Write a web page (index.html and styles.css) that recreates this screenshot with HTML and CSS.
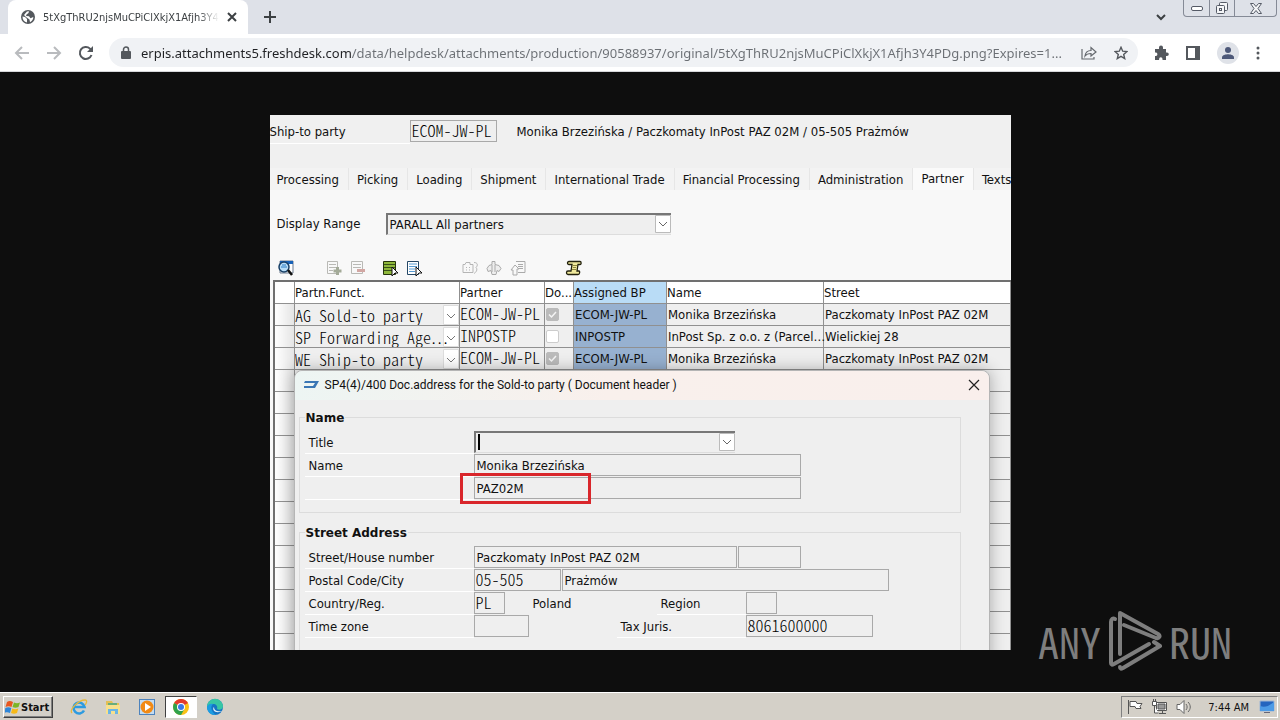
FILE: index.html
```html
<!DOCTYPE html>
<html lang="en">
<head>
    <meta charset="UTF-8">
    <meta name="viewport" content="width=device-width, initial-scale=1.0">
    <title>5tXgThRU2njsMuCPiClXkjX1Afjh3Y4PDg.png</title>
    <link rel="stylesheet" href="styles.css">
</head>
<body>
    <!-- browser tabs -->
    <header class="tab-strip">
        <div class="browser-tab">
            <svg class="globe" width="14" height="14" viewBox="0 0 14 14"><circle cx="7" cy="7" r="7" fill="#54585d"/><path d="M1.5 6.5 4 7l2 2v3.5C3 12 1.500 9.500 1.500 6.500zM6 1.500 8 1.300 7.500 3 5.500 4.500 5 6 8 6.200l1.500 2L12.300 7C12.500 9 11 11.500 9 12.200L8.500 9.500 5 7 3 5z" fill="#fff"/></svg>
            <span class="tab-title">5tXgThRU2njsMuCPiClXkjX1Afjh3Y4P</span>
            <button class="icon-btn" aria-label="Close tab"><svg width="10" height="10" viewBox="0 0 10 10"><path d="M1 1l8 8M9 1L1 9" stroke="#3c4043" stroke-width="2"/></svg></button>
        </div>
        <button class="icon-btn new-tab" aria-label="New tab"><svg width="12" height="12" viewBox="0 0 12 12"><path d="M6 0v12M0 6h12" stroke="#3c4043" stroke-width="2"/></svg></button>
        <button class="icon-btn tab-search" aria-label="Search tabs"><svg width="10" height="7" viewBox="0 0 10 7"><path d="M1 1l4 4 4-4" fill="none" stroke="#3c4043" stroke-width="2"/></svg></button>
        <div class="window-controls">
            <button aria-label="Minimize"><svg width="12" height="5" viewBox="0 0 12 5"><rect x=".5" y=".5" width="11" height="4" rx="1.500" fill="#fff" stroke="#555a66"/></svg></button>
            <button aria-label="Restore"><svg width="14" height="13" viewBox="0 0 14 13" fill="#f4f5f7" stroke="#555a66"><rect x="4.500" y=".5" width="8" height="8" rx="1"/><rect x="1.500" y="3.500" width="8" height="8" rx="1"/><rect x="4.500" y="6.500" width="2" height="2"/></svg></button>
            <button class="wide" aria-label="Close"><svg width="12" height="11" viewBox="0 0 12 11"><path d="M.5.5h3L6 3.500 8.500.5h3L8 5.500l3.500 5h-3L6 7.500l-2.500 3h-3L4 5.500z" fill="#f4f5f7" stroke="#555a66"/></svg></button>
        </div>
    </header>

    <!-- address bar -->
    <nav class="toolbar">
        <button class="icon-btn" aria-label="Back"><svg width="16" height="14" viewBox="0 0 16 14"><path d="M15 7H2M8 1L2 7l6 6" fill="none" stroke="#b9bbbe" stroke-width="2"/></svg></button>
        <button class="icon-btn" aria-label="Forward"><svg width="16" height="14" viewBox="0 0 16 14"><path d="M1 7h13M8 1l6 6-6 6" fill="none" stroke="#b9bbbe" stroke-width="2"/></svg></button>
        <button class="icon-btn" aria-label="Reload"><svg width="16" height="16" viewBox="0 0 16 16"><path d="M13.500 10A6 6 0 1 1 12 3.600L14 6" fill="none" stroke="#54585d" stroke-width="2"/><path d="M15 1v6H9z" fill="#54585d"/></svg></button>
        <div class="omnibox">
            <svg width="10" height="13" viewBox="0 0 10 13"><rect y="5" width="10" height="8" rx="1" fill="#54585d"/><path d="M2.500 6V3.500a2.500 2.500 0 0 1 5 0V6" fill="none" stroke="#54585d" stroke-width="1.500"/></svg>
            <input class="url" type="text" aria-label="Address" value="erpis.attachments5.freshdesk.com/data/helpdesk/attachments/production/90588937/original/5tXgThRU2njsMuCPiClXkjX1Afjh3Y4PDg.png?Expires=1...">
            <button class="icon-btn" aria-label="Share"><svg width="16" height="14" viewBox="0 0 16 14"><path d="M1 3v10h12v-2M4 10c.5-4 3-5.500 6-5.500V1.500L15 6l-5 4V7.500c-2.500 0-4.500.5-6 2.500z" fill="none" stroke="#65696e" stroke-width="1.200"/></svg></button>
            <button class="icon-btn" aria-label="Bookmark"><svg width="14" height="14" viewBox="0 0 14 14"><path d="M7 1.300l1.700 3.900 4.200.4-3.200 2.800 1 4.200L7 10.400l-3.700 2.200 1-4.200L1.100 5.600l4.200-.4z" fill="none" stroke="#54585d" stroke-width="1.400"/></svg></button>
        </div>
        <div class="extensions">
            <button class="icon-btn" aria-label="Extensions"><svg width="15" height="15" viewBox="0 0 15 15"><path d="M1 4h4V2.500a2 2 0 0 1 4 0V4h3v3.500h1a1.800 1.800 0 0 1 0 3.600h-1V15H8.500v-1a1.700 1.700 0 0 0-3.400 0v1H1v-4h1a1.800 1.800 0 0 0 0-3.500H1z" fill="#54585d"/></svg></button>
            <button class="icon-btn" aria-label="Side panel"><svg width="14" height="14" viewBox="0 0 14 14"><path d="M1 1h12v12H1z" fill="#fff" stroke="#54585d" stroke-width="2"/><path d="M9 1h4v12H9z" fill="#54585d"/></svg></button>
            <button class="icon-btn" aria-label="Profile"><svg width="22" height="22" viewBox="0 0 22 22"><circle cx="11" cy="11" r="11" fill="#dfe2e8"/><circle cx="11" cy="8" r="3" fill="#4d5878"/><path d="M5 17v-1.500C5 13 9 12.300 11 12.300s6 .7 6 3.200V17z" fill="#4d5878"/></svg></button>
            <button class="icon-btn" aria-label="Menu"><svg width="4" height="14" viewBox="0 0 4 14" fill="#54585d"><circle cx="2" cy="2" r="1.500"/><circle cx="2" cy="7" r="1.500"/><circle cx="2" cy="12" r="1.500"/></svg></button>
        </div>
    </nav>

    <main class="viewport">
        <section class="sap">
            <div class="sap-header">
                <label class="ship-label" for="shipTo">Ship-to party</label>
                <input class="field mono ship-field" type="text" id="shipTo" value="ECOM-JW-PL">
                <span>Monika Brzezińska / Paczkomaty InPost PAZ 02M / 05-505 Prażmów</span>
            </div>
            <div class="sap-tabs">
                <button>Processing</button>
                <button>Picking</button>
                <button>Loading</button>
                <button>Shipment</button>
                <button>International Trade</button>
                <button>Financial Processing</button>
                <button>Administration</button>
                <button class="active">Partner</button>
                <button>Texts</button>
            </div>
            <div class="range-row">
                <label for="range">Display Range</label>
                <select class="dropdown" id="range"><option>PARALL All partners</option></select>
            </div>
            <div class="sap-tools">
                <button aria-label="Details"><svg width="18" height="18" viewBox="0 0 18 18"><path d="M3 2h13v12H3z" fill="#fff" stroke="#6d7b8d"/><path d="M3 2h13v3H3z" fill="#1862b8"/><circle cx="7" cy="8" r="5" fill="#b7dcf7" stroke="#173f66" stroke-width="1.500"/><path d="M4 8h6M5 6h4" stroke="#2b7cc4"/><path d="M11 11l4 5" stroke="#111" stroke-width="2.500"/></svg></button>
                <button class="gap-l" aria-label="Insert row" disabled><svg width="18" height="18" viewBox="0 0 18 18" fill="none" stroke="#b9b9b5"><path d="M2.500 2.500h10v12h-10zM4 5.500h7M4 8.500h7M4 11.500h4"/><path d="M12.500 8v8M8.500 12h8" stroke="#a3aa98" stroke-width="3"/></svg></button>
                <button aria-label="Delete row" disabled><svg width="18" height="18" viewBox="0 0 18 18" fill="none" stroke="#b9b9b5"><path d="M2.500 2.500h11v12h-11zM4 5.500h8M4 8.500h8"/><path d="M8 11.500h8" stroke="#d2a7a3" stroke-width="3"/></svg></button>
                <button class="gap-s" aria-label="Select all"><svg width="18" height="18" viewBox="0 0 18 18"><path d="M2.500 2.500h12v13h-12z" fill="#8fb83b" stroke="#26340c"/><path d="M3 5.500h11M3 8.500h11M3 11.500h11" stroke="#39521a"/><path d="M11 8l6 6h-3l-3 3z" fill="#fff" stroke="#111"/></svg></button>
                <button aria-label="Deselect all"><svg width="18" height="18" viewBox="0 0 18 18"><path d="M2.500 2.500h11v13h-11z" fill="#fff" stroke="#254866"/><path d="M4 5h8M4 7.500h8M4 10h6M4 12.500h6" stroke="#579bd3"/><path d="M11 8l6 6h-3l-3 3z" fill="#fff" stroke="#111"/></svg></button>
                <button class="gap-m" aria-label="Address" disabled><svg width="18" height="18" viewBox="0 0 18 18" fill="none" stroke="#b5b5b5"><path d="M2 5.500h2l1-2h4v2h3v8H2zM5 8.500h1M8 8.500h1M5 11h1M8 11h1M13 3.500c4 0 4 3 2 5 2 2 0 5-2 6"/></svg></button>
                <button aria-label="Partner up" disabled><svg width="18" height="18" viewBox="0 0 18 18" fill="#eee" stroke="#aaa"><path d="M7 2.500h3v3l4 1 2 3-2 3-2-1-1 4H7l-1-4-3 1-1-3 2-3 3-1z"/><path d="M7 6v7M10 6v7"/></svg></button>
                <button aria-label="Copy" disabled><svg width="18" height="18" viewBox="0 0 18 18" fill="none" stroke="#aaa"><path d="M7 2.500h9v11H9M9 5.500h5M9 7.500h5M9 9.500h5M2 11l4-5 4 4H8v6H4v-5z"/></svg></button>
                <button class="gap-m" aria-label="Log"><svg width="18" height="18" viewBox="0 0 18 18"><path d="M4 2.500h11c1.500 0 1.500 3 0 3h-2L12 12h2c1 0 1 3.500-1 3.500H3c-2 0-2-3.500 0-3.500h3l1-6.500H4c-2 0-2-3 0-3z" fill="#f0e99c" stroke="#22210e" stroke-width="1.300"/><path d="M8 6.500h4M8 8.500h3M7 10.500h4" stroke="#8f873b"/></svg></button>
            </div>

            <table class="partners">
                <colgroup><col class="c-sel"><col class="c-func"><col class="c-partner"><col class="c-doc"><col class="c-bp"><col class="c-name"><col class="c-street"></colgroup>
                <thead>
                    <tr><th></th><th>Partn.Funct.</th><th>Partner</th><th>Do...</th><th class="picked">Assigned BP</th><th>Name</th><th>Street</th></tr>
                </thead>
                <tbody>
                    <tr><td></td><td class="func"><select class="mono" aria-label="Function"><option>AG Sold-to party</option></select></td><td class="mono">ECOM-JW-PL</td><td><input type="checkbox" aria-label="Document address" checked disabled></td><td class="picked">ECOM-JW-PL</td><td>Monika Brzezińska</td><td>Paczkomaty InPost PAZ 02M</td></tr>
                    <tr><td></td><td class="func"><select class="mono" aria-label="Function"><option>SP Forwarding Age…</option></select></td><td class="mono">INPOSTP</td><td><input type="checkbox" aria-label="Document address" disabled></td><td class="picked">INPOSTP</td><td>InPost Sp. z o.o. z (Parcel…</td><td>Wielickiej 28</td></tr>
                    <tr><td></td><td class="func"><select class="mono" aria-label="Function"><option>WE Ship-to party</option></select></td><td class="mono">ECOM-JW-PL</td><td><input type="checkbox" aria-label="Document address" checked disabled></td><td class="picked">ECOM-JW-PL</td><td>Monika Brzezińska</td><td>Paczkomaty InPost PAZ 02M</td></tr>
                    <tr><td></td><td colspan="6"></td></tr>
                    <tr><td></td><td colspan="6"></td></tr>
                    <tr><td></td><td colspan="6"></td></tr>
                    <tr><td></td><td colspan="6"></td></tr>
                    <tr><td></td><td colspan="6"></td></tr>
                    <tr><td></td><td colspan="6"></td></tr>
                    <tr><td></td><td colspan="6"></td></tr>
                    <tr><td></td><td colspan="6"></td></tr>
                    <tr><td></td><td colspan="6"></td></tr>
                    <tr><td></td><td colspan="6"></td></tr>
                    <tr><td></td><td colspan="6"></td></tr>
                    <tr><td></td><td colspan="6"></td></tr>
                    <tr><td></td><td colspan="6"></td></tr>
                </tbody>
            </table>

            <!-- address popup -->
            <div class="dialog" role="dialog" aria-label="Document address">
                <div class="dialog-title">
                    <svg width="16" height="10" viewBox="0 0 16 10"><path d="M2 1h14l-4 7H1V6h9l2-3H1z" fill="#3b77b5"/></svg>
                    <span>SP4(4)/400 Doc.address for the Sold-to party ( Document header )</span>
                    <button class="icon-btn" aria-label="Close"><svg width="12" height="12" viewBox="0 0 12 12"><path d="M1 1l10 10M11 1L1 11" stroke="#222" stroke-width="1.200"/></svg></button>
                </div>
                <div class="dialog-body">
                    <fieldset>
                        <legend>Name</legend>
                        <div class="form-row">
                            <label for="title">Title</label>
                            <div class="title-box"><select class="dropdown" id="title"><option></option></select></div>
                        </div>
                        <div class="form-row">
                            <label for="name">Name</label>
                            <input class="field w-name" type="text" id="name" value="Monika Brzezińska">
                        </div>
                        <div class="form-row">
                            <label for="name2"></label>
                            <div class="marked"><input class="field w-name" type="text" id="name2" aria-label="Name 2" value="PAZ02M"></div>
                        </div>
                    </fieldset>
                    <fieldset>
                        <legend>Street Address</legend>
                        <div class="form-row">
                            <label for="street">Street/House number</label>
                            <input class="field w-street" type="text" id="street" value="Paczkomaty InPost PAZ 02M">
                            <input class="field w-house" type="text" aria-label="House number">
                        </div>
                        <div class="form-row">
                            <label for="postal">Postal Code/City</label>
                            <input class="field mono w-postal" type="text" id="postal" value="05-505">
                            <input class="field w-city" type="text" aria-label="City" value="Prażmów">
                        </div>
                        <div class="form-row">
                            <label for="country">Country/Reg.</label>
                            <input class="field mono w-code" type="text" id="country" value="PL">
                            <span class="country">Poland</span>
                            <label class="region" for="region">Region</label>
                            <input class="field mono w-code" type="text" id="region">
                        </div>
                        <div class="form-row">
                            <label for="zone">Time zone</label>
                            <input class="field mono w-zone" type="text" id="zone">
                            <label class="tax" for="tax">Tax Juris.</label>
                            <input class="field mono w-tax" type="text" id="tax" value="8061600000">
                        </div>
                    </fieldset>
                </div>
            </div>
        </section>

        <div class="watermark">
            <span>ANY</span>
            <svg width="54" height="62" viewBox="0 0 54 62" fill="none" stroke="#7e7e7e" stroke-width="4" stroke-linejoin="round" stroke-linecap="round"><path d="M7 9c-2-1-4 0-4 3v41c0 2 1 2 3 1l35-20"/><path d="M12 44V3l38 21c3 2 1 5-2 4L16 15"/><path d="M12 57c0 2 1 2 3 1l37-22-6-4"/></svg>
            <span>RUN</span>
        </div>
    </main>

    <footer class="taskbar">
        <button class="start">
            <svg width="16" height="15" viewBox="0 0 16 15"><path d="M2 2c2-1.500 4-1 6 0L6.500 7c-2-1-4-1-6 0z" fill="#e8571f"/><path d="M9 2.500c2 1 4 1 6 0L13.500 7c-2 1-4 1-6 0z" fill="#7cb526"/><path d="M.3 8c2-1 4-1 6 0L5 13c-2-1-4-1-5.500 0z" fill="#2f86d8"/><path d="M7.300 8.500c2 1 4 1 6 0L12 13c-2 1-4 1-6 0z" fill="#f7b917"/></svg>
            Start
        </button>
        <div class="launchers">
            <button aria-label="Internet Explorer"><svg width="18" height="18" viewBox="0 0 18 18" fill="none"><path d="M14 12.500A5.500 5.500 0 1 1 14.500 9H5" stroke="#2d9be0" stroke-width="2.600"/><path d="M2 15C-1 12 8 2 15 2c3 0 1 4 0 5" stroke="#e8b93a" stroke-width="1.300"/></svg></button>
            <button aria-label="Explorer"><svg width="18" height="18" viewBox="0 0 18 18"><path d="M2 3h6l1 2h6v11H2z" fill="#e3bf55"/><path d="M4 5h9v4H4z" fill="#68ad7b"/><path d="M2 7h14v9H2z" fill="#f7e08d"/><path d="M4 16v-5h10v5h-3v-3H7v3z" fill="#6bb5e5"/></svg></button>
            <button aria-label="Media Player"><svg width="18" height="18" viewBox="0 0 18 18"><rect x="1.500" y="1.500" width="15" height="15" fill="#c3dcf2" stroke="#4d83bd"/><circle cx="9" cy="9" r="6.500" fill="#f28a14"/><path d="M7 5l6 4-6 4z" fill="#fff"/></svg></button>
            <button class="pressed" aria-label="Chrome"><svg width="16" height="16" viewBox="0 0 16 16"><circle cx="8" cy="8" r="8" fill="#fbc116"/><path d="M8 8L1.100 4A8 8 0 0 1 15 4z" fill="#e33b2e"/><path d="M8 8L1.100 4A8 8 0 0 0 8 16l3.500-6z" fill="#30a24c"/><circle cx="8" cy="8" r="4" fill="#fff"/><circle cx="8" cy="8" r="3" fill="#3b78e7"/></svg></button>
            <button aria-label="Edge"><svg width="18" height="18" viewBox="0 0 18 18"><circle cx="9" cy="9" r="8" fill="#1675c4"/><path d="M1 9a8 8 0 0 1 16-.5c0 3-4 4-6 2.500 1-3-1-5-4-5-3 0-5 1.500-6 3z" fill="#38c6a4"/><path d="M1 9c1-3 4-4 6-3-3 2-2 8 3 11C4 17.500 1 13 1 9z" fill="#1b9de2"/><path d="M8 9c0 4 4 5 8 4-2 1.500-7 2-8.500-1C7 11 7.300 9.500 8 9z" fill="#e9f3f8"/></svg></button>
        </div>
        <div class="tray">
            <svg width="16" height="16" viewBox="0 0 16 16" fill="#fff" stroke="#555"><path d="M1.500 1v14M3 2.500h6l1 2h5l-2 3 1 2H9l-1-2H3z"/></svg>
            <svg width="17" height="16" viewBox="0 0 17 16" fill="#fff" stroke="#555"><path d="M5.500 3.500h10v8h-10zM8 14.500h7M11.500 12v2"/><path d="M7 5h7v5H7z" fill="#999"/><path d="M1.500 2.500h4v4h-4zM2.500 0v2M4.500 0v2M3.500 7v7h4"/></svg>
            <svg width="16" height="16" viewBox="0 0 16 16" fill="none" stroke="#666"><path d="M1 5.500h3l4-4v13l-4-4H1z" fill="#fff"/><path d="M10 5c1.500 2 1.500 4 0 6M12 3c3 3 3 7 0 10"/></svg>
            <time>7:44 AM</time>
            <svg width="16" height="14" viewBox="0 0 16 14"><path d="M1 1h14v10H1z" fill="#2465bf" stroke="#9fb6d4"/><path d="M1 6c5 2 9 0 14-4v9H1z" fill="#4d9be6"/><path d="M5 12.500h6" stroke="#667"/></svg>
        </div>
    </footer>
</body>
</html>
```

FILE: styles.css
```css
*,
*::before,
*::after {
    box-sizing: border-box;
}

body {
    margin: 0;
    min-height: 100vh;
    display: flex;
    flex-direction: column;
    font-family: "DejaVu Sans Condensed", "Noto Sans", sans-serif;
    font-size: 13px;
    color: #111;
}

button,
input,
select {
    font: inherit;
    color: inherit;
    margin: 0;
    padding: 0;
    border: none;
    background: none;
    outline: none;
    border-radius: 0;
}

select {
    appearance: none;
}

svg {
    display: block;
    flex: none;
}

.icon-btn {
    display: flex;
    align-items: center;
    justify-content: center;
}

/* browser */
.tab-strip {
    height: 34px;
    display: flex;
    align-items: center;
    padding: 0 3px 0 8px;
    background: #dee1e8;
}

.browser-tab {
    width: 240px;
    height: 34px;
    display: flex;
    align-items: center;
    gap: 8px;
    padding: 0 11px 0 13px;
    background: #fff;
    border-radius: 8px 8px 0 0;
}

.tab-title {
    flex: 1;
    min-width: 0;
    white-space: nowrap;
    font-size: 11px;
    color: #3c4043;
    mask-image: linear-gradient(90deg, #000 88%, transparent);
}

.new-tab {
    margin-left: 16px;
}

.tab-search {
    margin-left: auto;
    margin-right: 17px;
}

.window-controls {
    align-self: flex-start;
    height: 17px;
    display: flex;
    border: 1px solid #858a96;
    border-top: none;
    border-radius: 0 0 4px 4px;
}

.window-controls button {
    width: 25px;
    display: flex;
    align-items: center;
    justify-content: center;
}

.window-controls button + button {
    border-left: 1px solid #858a96;
}

.window-controls .wide {
    width: 42px;
}

.toolbar {
    height: 38px;
    display: flex;
    align-items: center;
    gap: 16px;
    padding: 0 20px 0 14px;
    background: #fff;
    border-bottom: 1px solid #d5d7da;
}

.omnibox {
    flex: 1;
    height: 29px;
    display: flex;
    align-items: center;
    gap: 10px;
    margin-left: -1px;
    padding: 0 6px 0 12px;
    background: #f0f2f5;
    border-radius: 15px;
}

.url {
    flex: 1;
    min-width: 0;
    font-family: "Noto Sans", sans-serif;
    font-size: 13px;
    color: transparent;
    background: linear-gradient(90deg, #202124 211px, #6b6f74 211px);
    -webkit-background-clip: text;
    background-clip: text;
}

.omnibox .icon-btn {
    width: 22px;
}

.extensions {
    display: flex;
    align-items: center;
    gap: 17px;
}

.viewport {
    flex: 1;
    display: flex;
    align-items: center;
    justify-content: center;
    position: relative;
    background: #0e0e0e;
}

/* delivery screen */
.sap {
    position: relative;
    width: 741px;
    max-width: 100%;
    height: 535px;
    overflow: hidden;
    background: #f8f8f8;
    white-space: nowrap;
}

.mono {
    font-family: "Noto Sans CJK JP", "Liberation Mono", monospace;
    font-feature-settings: "hwid";
    font-size: 16px;
    font-weight: 300;
    color: #000;
}

.field {
    height: 22px;
    padding: 1px 2px 0;
    border: 1px solid #a9a9a9;
    background: #efefef;
}

.field.mono {
    padding: 0 1px 1px;
}

.sap-header {
    height: 53px;
    display: flex;
    align-items: flex-start;
    line-height: 23px;
    padding-top: 5px;
    background: #f0f0f0;
}

.ship-label {
    width: 140px;
    border-bottom: 1px solid #fff;
}

.ship-field {
    width: 87px;
    margin-right: 20px;
}

.sap-tabs {
    height: 22px;
    display: flex;
    align-items: flex-end;
    background: #f0f0f0;
}

.sap-tabs button {
    flex: none;
    height: 22px;
    padding: 2px 9px 0 8px;
    border-right: 1px solid #e6e6e6;
    background: #f3f3f3;
}

.sap-tabs button:first-child {
    padding-left: 7px;
}

.sap-tabs .active {
    padding-top: 0;
    background: #fafafa;
}

.range-row {
    display: flex;
    align-items: center;
    margin-top: 23px;
    padding-left: 7px;
}

.range-row label {
    width: 109px;
}

.dropdown {
    width: 285px;
    height: 22px;
    padding: 0 2px;
    border-top: 2px solid #777;
    border-left: 2px solid #777;
    border-bottom: 1px solid #ddd;
    background: #efefef url("data:image/svg+xml,%3Csvg xmlns='http://www.w3.org/2000/svg' width='16' height='18'%3E%3Cpath d='M.5.5h15v17H.5z' fill='%23fff' stroke='%23bbb'/%3E%3Cpath d='M4 7l4 4 4-4' fill='none' stroke='%23666'/%3E%3C/svg%3E") no-repeat right center;
}

.sap-tools {
    display: flex;
    align-items: center;
    gap: 6px;
    margin: 24px 0 3px;
    padding-left: 7px;
}

.gap-l {
    margin-left: 24px;
}

.gap-m {
    margin-left: 32px;
}

.gap-s {
    margin-left: 8px;
}

.partners {
    width: 738px;
    margin: 0 0 0 3px;
    table-layout: fixed;
    border-collapse: collapse;
    border-top: 2px solid #707070;
    border-left: 2px solid #707070;
}

.c-sel {
    width: 21px;
}

.c-func {
    width: 165px;
}

.c-partner {
    width: 85px;
}

.c-doc {
    width: 29px;
}

.c-bp {
    width: 93px;
}

.c-name {
    width: 157px;
}

.partners th,
.partners td {
    height: 22px;
    padding: 0 1px;
    line-height: 20px;
    text-align: left;
    font-weight: normal;
    border-right: 1px solid #909090;
    border-bottom: 1px solid #909090;
    background: #efefef;
}

.partners td.mono {
    padding: 0 0 3px;
    line-height: 18px;
    font-weight: 300;
}

.partners th {
    height: 23px;
    padding: 1px 0 0;
    background: #fff;
}

.partners td:first-child {
    background: linear-gradient(90deg, #fff, #e4e4e4);
}

.partners th.picked {
    background: #b9dcf6;
}

.partners td.picked {
    background: #97b1d0;
}

.partners td.func {
    padding: 0;
}

.partners select {
    display: block;
    width: 100%;
    height: 23px;
    margin: -1px 0;
    background: url("data:image/svg+xml,%3Csvg xmlns='http://www.w3.org/2000/svg' width='16' height='20'%3E%3Cpath d='M.5.5h15v19H.5z' fill='%23fff' stroke='%23ddd'/%3E%3Cpath d='M4 9l4 4 4-4' fill='none' stroke='%23777'/%3E%3C/svg%3E") no-repeat right center;
}

.partners input {
    appearance: none;
    display: block;
    width: 13px;
    height: 13px;
    border: 1px solid #ccc;
    border-radius: 2px;
    background: #fff;
}

.partners input:checked {
    border-color: #bbb;
    background: #bbb url("data:image/svg+xml,%3Csvg xmlns='http://www.w3.org/2000/svg' width='11' height='11'%3E%3Cpath d='M2 5.500l2.500 2.500L9 3' fill='none' stroke='%23f4f4f4' stroke-width='1.500'/%3E%3C/svg%3E");
}

/* popup over the table */
.dialog {
    position: absolute;
    left: 24px;
    top: 255px;
    width: 696px;
    height: 300px;
    border: 1px solid #b5b5b5;
    border-radius: 8px 8px 0 0;
    background: #efefef;
    box-shadow: 0 0 16px rgba(0, 0, 0, 0.3);
}

.dialog-title {
    height: 29px;
    display: flex;
    align-items: center;
    gap: 6px;
    padding: 0 9px 0 8px;
    border-radius: 8px 8px 0 0;
    background: linear-gradient(90deg, #edf5f3, #f9f0ec 45%, #f9efec);
    font-family: Roboto, sans-serif;
    font-size: 12px;
}

.dialog-title .icon-btn {
    margin-left: auto;
}

.dialog-body {
    padding: 10px 28px 0 4px;
}

fieldset {
    min-width: 0;
    margin: 0 0 12px;
    padding: 5px 5px 12px;
    border: 1px solid #dcdcdc;
}

legend {
    padding: 0 1px;
    line-height: 16px;
    font-family: "DejaVu Sans", sans-serif;
    font-size: 12px;
    font-weight: bold;
}

.form-row {
    height: 23px;
    display: flex;
    align-items: flex-start;
    line-height: 23px;
}

.form-row label {
    flex: none;
    width: 169px;
    height: 23px;
    padding-left: 4px;
    border-bottom: 1px solid #fff;
}

.title-box {
    position: relative;
}

/* text caret of the focused box */
.title-box::before {
    content: "";
    position: absolute;
    left: 4px;
    top: 3px;
    width: 2px;
    height: 16px;
    background: #000;
}

.title-box .dropdown {
    display: block;
    width: 261px;
}

.marked {
    position: relative;
}

.marked::after {
    content: "";
    position: absolute;
    left: -14px;
    top: -4px;
    width: 131px;
    height: 31px;
    border: 3px solid #d9262b;
}

.marked .field {
    display: block;
}

.w-name {
    width: 327px;
}

.w-street {
    width: 263px;
    margin-right: 1px;
}

.w-house {
    width: 63px;
}

.w-postal {
    width: 87px;
    margin-right: 1px;
}

.w-city {
    width: 327px;
}

.w-code {
    width: 31px;
}

.w-zone {
    width: 55px;
}

.w-tax {
    width: 127px;
}

.country {
    width: 124px;
    margin-left: 28px;
}

.form-row .region {
    width: 89px;
}

.form-row .tax {
    width: 129px;
    margin-left: 88px;
}

.watermark {
    position: absolute;
    right: 48px;
    bottom: 20px;
    display: flex;
    align-items: center;
    gap: 7px;
    color: #7e7e7e;
    font-family: "Noto Sans CJK JP", sans-serif;
    font-feature-settings: "hwid";
    font-size: 42px;
    line-height: 62px;
}

/* taskbar */
.taskbar {
    height: 28px;
    display: flex;
    align-items: center;
    padding: 1px 2px 0 3px;
    background: #d4d0c8;
    border-top: 1px solid #fff;
}

.start {
    height: 22px;
    display: flex;
    align-items: center;
    padding: 0 3px 0 1px;
    border: 1px solid;
    border-color: #fff #404040 #404040 #fff;
    box-shadow: inset -1px -1px #808080;
    font-size: 11px;
    font-weight: bold;
}

.launchers {
    display: flex;
    margin-left: 10px;
    gap: 2px;
}

.launchers button {
    width: 32px;
    height: 22px;
    display: flex;
    align-items: center;
    justify-content: center;
}

.launchers .pressed {
    background: #fff;
    border: 1px solid #404040;
    border-color: #404040 #fff #fff #404040;
}

.tray {
    height: 22px;
    display: flex;
    align-items: center;
    gap: 8px;
    margin-left: auto;
    padding: 0 2px 0 5px;
    border: 1px solid;
    border-color: #808080 #fff #fff #808080;
    font-size: 11px;
}

.tray time {
    margin: 0 2px 0 8px;
}
```
